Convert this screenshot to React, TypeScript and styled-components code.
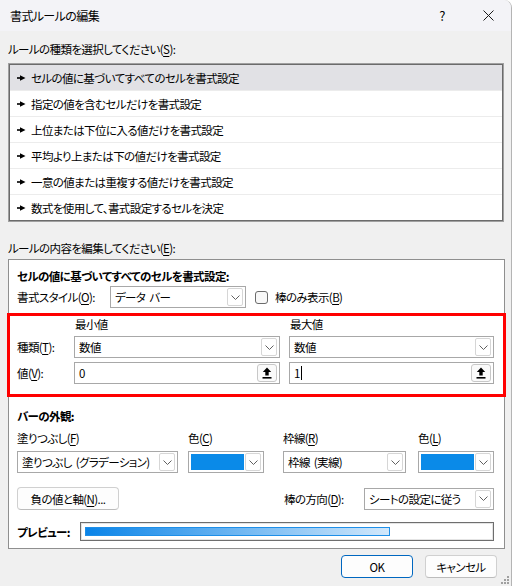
import * as React from 'react';
import styled, { createGlobalStyle } from 'styled-components';

const GlobalStyles = createGlobalStyle`
  html, body {
    margin: 0;
    padding: 0;
    background: #ffffff;
  }
  body {
    font-family: 'Segoe UI', 'Noto Sans CJK JP', 'Noto Sans', sans-serif;
    font-size: 11.5px;
    letter-spacing: -0.6px;
    word-spacing: 2px;
    font-feature-settings: 'palt';
    color: #000000;
  }
  u {
    text-underline-offset: 2px;
  }
`;

const Window = styled.div`
  position: relative;
  width: 512px;
  height: 586px;
  box-sizing: border-box;
  display: flex;
  flex-direction: column;
  background: #f0f0f0;
  border-right: 1px solid #b4b4b4;
  border-top-right-radius: 8px;
  overflow: hidden;
`;

const TitleBar = styled.div`
  height: 31px;
  flex-shrink: 0;
  display: flex;
  align-items: center;
  padding-left: 10px;
  background: #f3f3f7;
`;

const TitleText = styled.div`
  flex: 1;
  line-height: 16px;
  font-size: 12px;
`;

const CaptionButton = styled.div`
  width: 46px;
  height: 31px;
  display: flex;
  align-items: center;
  justify-content: center;
  font-size: 13px;
`;

const Content = styled.div`
  display: flex;
  flex-direction: column;
  padding: 10px 7px 0 8px;
`;

const Caption = styled.div<{ $mt?: number }>`
  line-height: 16px;
  height: 16px;
  margin-top: ${({ $mt }) => $mt ?? 0}px;
  white-space: nowrap;
`;

const RuleList = styled.div`
  margin-top: 6px;
  height: 159px;
  box-sizing: border-box;
  border: 1px solid #a0a0a0;
  box-shadow: inset 0 0 0 1px #6b6b6b;
  background: #ffffff;
  padding: 1px;
  display: flex;
  flex-direction: column;
`;

const RuleRow = styled.div<{ $selected?: boolean }>`
  height: 25px;
  flex-shrink: 0;
  display: flex;
  align-items: center;
  gap: 5px;
  padding-left: 7px;
  background: ${({ $selected }) => ($selected ? '#e1e1e5' : '#ffffff')};
  border-bottom: 1px solid #ececec;
  &:last-child {
    border-bottom: none;
  }
`;

const Panel = styled.div`
  margin-top: 3px;
  margin-right: -1px;
  background: #ffffff;
  border: 1px solid #8f8f8f;
  display: flex;
  flex-direction: column;
  padding: 8px 0 7px;
`;

const Heading = styled.div<{ $mt?: number }>`
  font-weight: bold;
  line-height: 16px;
  margin-top: ${({ $mt }) => $mt ?? 0}px;
  padding: 0 10px 0 8px;
`;

const Section = styled.div<{ $mt: number }>`
  display: flex;
  align-items: center;
  margin-top: ${({ $mt }) => $mt}px;
  padding: 0 10px 0 8px;
`;

const RowLabel = styled.div<{ $w: number }>`
  width: ${({ $w }) => $w}px;
  flex-shrink: 0;
  white-space: nowrap;
`;

const Select = styled.div<{ $w?: number }>`
  display: flex;
  width: ${({ $w }) => ($w ? `${$w}px` : '100%')};
  height: 22px;
  box-sizing: border-box;
  border: 1px solid #a8a8a8;
  background: #ffffff;
  padding: 1px 2px 1px 1px;
`;

const SelectText = styled.div`
  flex: 1;
  display: flex;
  align-items: center;
  padding-left: 3px;
  white-space: nowrap;
  overflow: hidden;
`;

const DropButton = styled.div`
  width: 16px;
  flex-shrink: 0;
  box-sizing: border-box;
  border: 1px solid #d6d6d6;
  border-radius: 2px;
  background: #ffffff;
  display: flex;
  align-items: center;
  justify-content: center;
`;

const UpButton = styled(DropButton)`
  width: 20px;
  border-color: #c8c8c8;
  border-radius: 3px;
  background: #fafafa;
`;

const Caret = styled.span`
  display: inline-block;
  width: 1px;
  height: 14px;
  margin-left: 1px;
  background: #000000;
  vertical-align: middle;
`;

const CheckBox = styled.div`
  width: 13px;
  height: 13px;
  box-sizing: border-box;
  border: 1px solid #6b6b6b;
  border-radius: 3px;
  background: #f8f8f8;
  margin: 0 7px 0 9px;
`;

const HighlightBox = styled.div`
  margin: 5px -2px 0;
  border: 3px solid #ff0000;
  display: grid;
  grid-template-columns: 48px 206px 205px;
  grid-template-rows: 16px 22px 22px;
  column-gap: 9px;
  row-gap: 4px;
  padding: 0 9px 10px 7px;
  align-items: center;
`;

const ColumnHead = styled.div`
  line-height: 16px;
  padding-left: 1px;
`;

const Field = styled.div<{ $w: number; $ml?: number }>`
  display: flex;
  flex-direction: column;
  gap: 5px;
  width: ${({ $w }) => $w}px;
  margin-left: ${({ $ml }) => $ml ?? 0}px;
  flex-shrink: 0;
`;

const FieldLabel = styled.div`
  line-height: 16px;
  white-space: nowrap;
`;

const FieldRow = styled.div<{ $mt: number }>`
  display: flex;
  margin-top: ${({ $mt }) => $mt}px;
  padding: 0 10px 0 8px;
`;

const ColorPicker = styled.div`
  display: flex;
  height: 22px;
  box-sizing: border-box;
  border: 1px solid #a8a8a8;
  background: #ffffff;
  padding: 1px 2px 1px 1px;
`;

const Swatch = styled.div`
  flex: 1;
  background: #0a8ae8;
  margin: 1px;
`;

const PushButton = styled.div<{ $w: number; $default?: boolean }>`
  width: ${({ $w }) => $w}px;
  height: 23px;
  box-sizing: border-box;
  border: 1px solid ${({ $default }) => ($default ? '#0067c0' : '#d0d0d0')};
  border-bottom-color: ${({ $default }) => ($default ? '#0067c0' : '#bcbcbc')};
  border-radius: 4px;
  background: #fdfdfd;
  display: flex;
  align-items: center;
  justify-content: center;
  white-space: nowrap;
  flex-shrink: 0;
`;

const Spacer = styled.div`
  flex: 1;
`;

const PreviewBox = styled.div`
  flex: 1;
  height: 19px;
  box-sizing: border-box;
  border: 1px solid #6e6e6e;
  box-shadow: inset 0 0 0 1px #e4e4e4;
  background: #ffffff;
  padding: 4px;
`;

const PreviewBar = styled.div`
  height: 100%;
  box-sizing: border-box;
  border: 1px solid #1e8fe8;
  background: linear-gradient(to right, #0a84e8, #d2e8fb);
`;

const Footer = styled.div`
  display: flex;
  justify-content: flex-end;
  gap: 12px;
  margin-top: 6px;
  padding-right: 7px;
`;

const Grip = styled.svg`
  position: absolute;
  right: 2px;
  bottom: 2px;
`;

const Pointer = () => (
  <svg width="9" height="6" viewBox="0 0 9 6">
    <rect x="0" y="2.2" width="4" height="1.6" fill="#000" />
    <path d="M3 0.3 L8.5 3 L3 5.7 Z" fill="#000" />
  </svg>
);

const Chevron = () => (
  <svg width="9" height="5" viewBox="0 0 9 5">
    <path d="M0.5 0.5 L4.5 4.5 L8.5 0.5" fill="none" stroke="#606060" strokeWidth="1" />
  </svg>
);

const UpArrow = () => (
  <svg width="10" height="12" viewBox="0 0 10 12">
    <path d="M5 0.5 L0.8 5 H3.3 V8.5 H6.7 V5 H9.2 Z" fill="#000" />
    <rect x="0.5" y="10" width="9" height="1.6" fill="#000" />
  </svg>
);

const CloseIcon = () => (
  <svg width="11" height="11" viewBox="0 0 11 11">
    <path d="M0.5 0.5 L10.5 10.5 M10.5 0.5 L0.5 10.5" stroke="#1a1a1a" strokeWidth="1" />
  </svg>
);

const DropSelect = ({ text, w }: { text: string; w?: number }) => (
  <Select $w={w}>
    <SelectText>{text}</SelectText>
    <DropButton>
      <Chevron />
    </DropButton>
  </Select>
);

const ValueInput = ({ children }: { children: React.ReactNode }) => (
  <Select>
    <SelectText>{children}</SelectText>
    <UpButton>
      <UpArrow />
    </UpButton>
  </Select>
);

const ColorDrop = () => (
  <ColorPicker>
    <Swatch />
    <DropButton>
      <Chevron />
    </DropButton>
  </ColorPicker>
);

const rules = [
  'セルの値に基づいてすべてのセルを書式設定',
  '指定の値を含むセルだけを書式設定',
  '上位または下位に入る値だけを書式設定',
  '平均より上または下の値だけを書式設定',
  '一意の値または重複する値だけを書式設定',
  '数式を使用して、書式設定するセルを決定',
];

const App = () => (
  <>
    <GlobalStyles />
    <Window>
      <TitleBar>
        <TitleText>書式ルールの編集</TitleText>
        <CaptionButton>?</CaptionButton>
        <CaptionButton>
          <CloseIcon />
        </CaptionButton>
      </TitleBar>
      <Content>
        <Caption>
          ルールの種類を選択してください(<u>S</u>):
        </Caption>
        <RuleList>
          {rules.map((r, i) => (
            <RuleRow key={r} $selected={i === 0}>
              <Pointer />
              {r}
            </RuleRow>
          ))}
        </RuleList>
        <Caption $mt={18}>
          ルールの内容を編集してください(<u>E</u>):
        </Caption>
        <Panel>
          <Heading>セルの値に基づいてすべてのセルを書式設定:</Heading>
          <Section $mt={2}>
            <RowLabel $w={93}>
              書式スタイル(<u>O</u>):
            </RowLabel>
            <DropSelect text="データ バー" w={136} />
            <CheckBox />
            <span>
              棒のみ表示(<u>B</u>)
            </span>
          </Section>
          <HighlightBox>
            <div />
            <ColumnHead>最小値</ColumnHead>
            <ColumnHead>最大値</ColumnHead>
            <RowLabel $w={48}>
              種類(<u>T</u>):
            </RowLabel>
            <DropSelect text="数値" />
            <DropSelect text="数値" />
            <RowLabel $w={48}>
              値(<u>V</u>):
            </RowLabel>
            <ValueInput>0</ValueInput>
            <ValueInput>
              1<Caret />
            </ValueInput>
          </HighlightBox>
          <Heading $mt={11}>バーの外観:</Heading>
          <FieldRow $mt={6}>
            <Field $w={161}>
              <FieldLabel>
                塗りつぶし(<u>F</u>)
              </FieldLabel>
              <DropSelect text="塗りつぶし (グラデーション)" />
            </Field>
            <Field $w={76} $ml={10}>
              <FieldLabel>
                色(<u>C</u>)
              </FieldLabel>
              <ColorDrop />
            </Field>
            <Field $w={123} $ml={19}>
              <FieldLabel>
                枠線(<u>R</u>)
              </FieldLabel>
              <DropSelect text="枠線 (実線)" />
            </Field>
            <Field $w={76} $ml={12}>
              <FieldLabel>
                色(<u>L</u>)
              </FieldLabel>
              <ColorDrop />
            </Field>
          </FieldRow>
          <Section $mt={14}>
            <PushButton $w={102}>
              負の値と軸(<u>N</u>)...
            </PushButton>
            <Spacer />
            <RowLabel $w={80}>
              棒の方向(<u>D</u>):
            </RowLabel>
            <DropSelect text="シートの設定に従う" w={130} />
          </Section>
          <Section $mt={12}>
            <RowLabel $w={63}>
              <b>プレビュー:</b>
            </RowLabel>
            <PreviewBox>
              <PreviewBar style={{ width: '75.5%' }} />
            </PreviewBox>
          </Section>
        </Panel>
        <Footer>
          <PushButton $w={72} $default>
            OK
          </PushButton>
          <PushButton $w={72}>キャンセル</PushButton>
        </Footer>
      </Content>
      <Grip width="8" height="8" viewBox="0 0 8 8">
        {[
          [6, 0],
          [6, 3],
          [3, 3],
          [6, 6],
          [3, 6],
          [0, 6],
        ].map(([x, y]) => (
          <rect key={`${x}-${y}`} x={x} y={y} width="2" height="2" fill="#a0a0a0" />
        ))}
      </Grip>
    </Window>
  </>
);

export default App;
